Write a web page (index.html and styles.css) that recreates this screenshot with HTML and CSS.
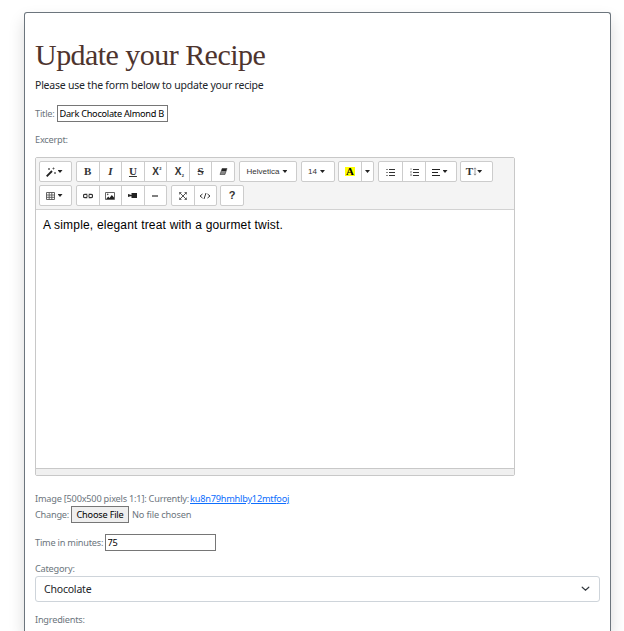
FILE: index.html
```html
<!DOCTYPE html>
<html lang="en">
<head>
<meta charset="utf-8">
<title>Update your Recipe</title>
<link rel="stylesheet" href="styles.css">
</head>
<body>
<main class="card">
  <h1><span>Update your Recipe</span></h1>
  <p class="intro"><span>Please use the form below to update your recipe</span></p>
  <form>
    <div class="row title-row"><label for="title">Title:</label><input id="title" class="field" value="Dark Chocolate Almond B"></div>
    <div class="row excerpt-row"><span>Excerpt:</span></div>
    <section class="editor">
      <div class="toolbar">
        <div class="tools">
          <div class="group"><button type="button" class="w33"><svg width="11" height="10" viewBox="0 0 11 10"><path d="M.7 9.3 6 4" stroke="#222" stroke-width="1.9"/><path d="M3 1v2M2 2h2M7.5.5v2M6.5 1.5h2M9 5v2M8 6h2" stroke="#555" stroke-width=".9"/></svg><i class="caret wand"></i></button></div>
          <div class="group seven"><button type="button"><b>B</b></button><button type="button"><em>I</em></button><button type="button"><u>U</u></button><button type="button"><span class="x">X<small class="sup">2</small></span></button><button type="button"><span class="x">X<small class="sub">2</small></span></button><button type="button"><s>S</s></button><button type="button"><svg width="9" height="7" viewBox="0 0 10 8"><path d="M3.5.5H9L7.8 4H2.3z" fill="#222"/><path d="M2.3 4h5.5L6.6 7.5H1z" fill="#888"/><path d="M3.5 .5H9L6.6 7.5H1z" fill="none" stroke="#333" stroke-width=".7"/></svg></button></div>
          <div class="group"><button type="button" class="w58"><span class="face">Helvetica</span><i class="caret"></i></button></div>
          <div class="group"><button type="button" class="w34"><span class="face">14</span><i class="caret"></i></button></div>
          <div class="group color"><button type="button" class="w23"><b class="mark">A</b></button><button type="button" class="w12"><i class="caret"></i></button></div>
          <div class="group lists"><button type="button" class="w23"><svg width="9" height="8" viewBox="0 0 9 8"><path d="M0 1.5h2M0 4.5h2M0 7.5h2" stroke="#888"/><path d="M3 1.5h6M3 4.5h6M3 7.5h6" stroke="#333"/></svg></button><button type="button" class="w23"><svg width="9" height="8" viewBox="0 0 9 8"><path d="M1 0v2M.2 3.5h1.4L.4 5h1.4M.2 6.5h1.5v1H.2" fill="none" stroke="#999" stroke-width=".8"/><path d="M3 1.5h6M3 4.5h6M3 7.5h6" stroke="#333"/></svg></button><button type="button" class="w33"><svg width="8" height="8" viewBox="0 0 8 8"><path d="M0 1.5h8M0 4.5h6M0 7.5h8" stroke="#222"/></svg><i class="caret"></i></button></div>
          <div class="group"><button type="button" class="w33 para"><span class="tee">T</span><svg width="4" height="9" viewBox="0 0 4 9"><path d="M2 1v7M.8 2.2 2 .8l1.2 1.4M.8 6.8 2 8.2l1.2-1.4" fill="none" stroke="#888" stroke-width=".8"/></svg><i class="caret near"></i></button></div>
        </div>
        <div class="tools">
          <div class="group"><button type="button" class="w33"><svg width="9" height="8" viewBox="0 0 9 8"><path d="M.5.5h8v7h-8zM.5 3h8M.5 5.3h8M3.2.5v7M5.8.5v7" fill="none" stroke="#555" stroke-width=".9"/></svg><i class="caret"></i></button></div>
          <div class="group four"><button type="button"><svg width="10" height="6" viewBox="0 0 10 6"><path d="M4.3 1.3H2a1.6 1.6 0 0 0 0 3.4h2.3M5.7 1.3H8a1.6 1.6 0 0 1 0 3.4H5.7M3 3h4" fill="none" stroke="#333" stroke-width="1.2"/></svg></button><button type="button"><svg width="10" height="8" viewBox="0 0 10 8"><path d="M.5.5h9v7h-9z" fill="#fff" stroke="#555" stroke-width=".9"/><path d="m1.2 7 2-2.4L4.5 6l2.3-3L9 5.5V7z" fill="#222"/><circle cx="2.7" cy="2.4" r=".8" fill="#555"/></svg></button><button type="button"><svg width="10" height="7" viewBox="0 0 10 7"><path d="M3.5 1H9v5H3.5zM0 2l3.5 1v1L0 5z" fill="#222"/></svg></button><button type="button"><svg width="8" height="2" viewBox="0 0 8 2"><path d="M1 1h6" stroke="#555" stroke-width="1.4"/></svg></button></div>
          <div class="group two"><button type="button"><svg width="8" height="8" viewBox="0 0 8 8"><path d="m1 1 6 6M7 1 1 7" stroke="#555"/><path d="M.3 2.5V.4h2.2M5.5.4h2.2v2.1M.3 5.5v2.1h2.2M5.5 7.6h2.2V5.5" fill="none" stroke="#333" stroke-width=".8"/></svg></button><button type="button"><svg width="12" height="8" viewBox="0 0 12 8"><path d="M3.5 2 1 4l2.5 2M8.5 2 11 4 8.5 6M7 1 5 7" fill="none" stroke="#333"/></svg></button></div>
          <div class="group"><button type="button" class="w23"><span class="help">?</span></button></div>
        </div>
      </div>
      <div class="editable"><span>A simple, elegant treat with a gourmet twist.</span></div>
      <div class="statusbar"></div>
    </section>
    <div class="row image-row"><span class="current">Image [500x500 pixels 1:1]: Currently:</span><a href="#"><span>ku8n79hmhlby12mtfooj</span></a></div>
    <div class="row file-row"><span class="change">Change:</span><button type="button" class="file">Choose File</button><span class="chosen">No file chosen</span></div>
    <div class="row time-row"><label for="time">Time in minutes:</label><input id="time" class="field" value="75"></div>
    <div class="row category-row"><span>Category:</span></div>
    <div class="select"><span>Chocolate</span><svg width="9" height="6" viewBox="0 0 9 6"><path d="m1.2 1.2 3.3 3L7.8 1.2" fill="none" stroke="#343a40" stroke-width="1.2" stroke-linecap="round"/></svg></div>
    <div class="row ingredients-row"><span>Ingredients:</span></div>
  </form>
</main>
</body>
</html>
```
FILE: styles.css
```css
* { box-sizing: border-box; }
body { margin: 0; height: 631px; overflow: hidden; background: #fff; font-family: "Noto Sans", sans-serif; color: #212529; }
.card { width: 587px; height: 619px; margin: 12px 0 0 24px; padding: 24px 10px 0; border: 1px solid #6c757d; border-bottom: 0; border-radius: 3px 3px 0 0; background: #fff; box-shadow: 0 8px 16px rgba(0,0,0,.15); overflow: hidden; }
h1 { height: 38px; margin: 0; font: 400 30px/36px "Liberation Serif", serif; letter-spacing: -.54px; color: #4e342e; white-space: nowrap; }
.intro { height: 17px; margin: 2px 0 0; font-size: 10.5px; line-height: 17px; letter-spacing: -.22px; white-space: nowrap; }
.row { display: flex; align-items: center; font-size: 9.2px; line-height: 14px; color: #6c757d; white-space: nowrap; letter-spacing: -.22px; }
.field { width: 111px; height: 17px; padding: 0 2px 0 1.5px; border: 1px solid #767676; border-radius: 0; background: #fff; color: #000; font: 9.2px/14px "Noto Sans", sans-serif; letter-spacing: -.26px; }
.title-row { height: 17px; margin-top: 11px; }
.title-row label { width: 22px; }
.excerpt-row { height: 14px; margin-top: 11px; }
.editor { width: 480px; height: 319px; margin-top: 10px; border: 1px solid #c8c8c8; border-radius: 2px; }
.toolbar { height: 52px; padding: 3px 3px 0; background: #f4f4f4; border-bottom: 1px solid #d2d2d2; }
.tools { display: flex; gap: 4px; height: 21px; margin-bottom: 3px; }
.group { display: flex; border: 1px solid #ccc; border-radius: 2px; background: #fff; }
.group button { display: flex; align-items: center; justify-content: center; flex: 1; height: 19px; padding: 0; border: 0; background: transparent; color: #333; font: 700 11px/19px "Liberation Serif", serif; }
.group button + button { border-left: 1px solid #ccc; }
.group .w33 { flex: none; width: 31px; padding-right: 3px; }
.group .para { padding-right: 5px; }
.group .w58 { flex: none; width: 56px; padding-right: 2px; }
.group .w34 { flex: none; width: 32px; padding-right: 3px; }
.group .w23 { flex: none; width: 22px; }
.group .w12 { flex: none; width: 12px; }
.seven { width: 159px; }
.four { width: 91px; }
.two { width: 46px; }
.lists { width: 79px; }
.lists button.w23 { width: 23px; }
.color { margin-left: -1px; width: 36px; }
.tools > .group:last-child { margin-left: -1px; }
.caret { width: 5px; height: 3px; margin-left: 3px; background: #222; clip-path: polygon(0 0, 100% 0, 50% 100%); }
.wand { margin-left: 1px; }
.w12 .caret, .near { margin-left: 0; }
.face { font: 8px/19px "Liberation Sans", sans-serif; }
.mark { padding: 0 1px; background: #ff0; color: #000; line-height: 9px; }
.x { position: relative; font: 700 10px/19px "Liberation Sans", sans-serif; }
.x small { position: absolute; left: 7px; font-size: 4px; line-height: 5px; }
.sup { top: 4px; }
.sub { top: 11px; }
.tee { font-size: 11px; }
.help { font: 700 11px/19px "Liberation Sans", sans-serif; }
.editable { height: 258px; padding: 7px; color: #000; font: 12px/16px "Liberation Sans", sans-serif; letter-spacing: .19px; }
.statusbar { height: 7px; border-top: 1px solid #c8c8c8; background: #f0f0f0; }
.image-row { height: 14px; margin-top: 16px; }
.current { width: 155px; }
a { color: #0d6efd; text-decoration: underline; }
.file-row { height: 17px; margin-top: 0; }
.change { width: 36px; }
.file { width: 58px; height: 17px; padding: 0; border: 1px solid #767676; border-radius: 0; background: #efefef; color: #000; font: 9.2px/14px "Noto Sans", sans-serif; letter-spacing: -.2px; }
.chosen { margin-left: 3px; letter-spacing: -.15px; }
.time-row { height: 17px; margin-top: 11px; }
.time-row label { width: 70px; }
.category-row { height: 14px; margin-top: 11px; }
.select { display: flex; align-items: center; justify-content: space-between; height: 26px; width: 565px; padding: 0 9px 0 8px; border: 1px solid #ced4da; border-radius: 3px; font-size: 10.5px; letter-spacing: -.2px; }
.ingredients-row { height: 14px; margin-top: 11px; }
```
